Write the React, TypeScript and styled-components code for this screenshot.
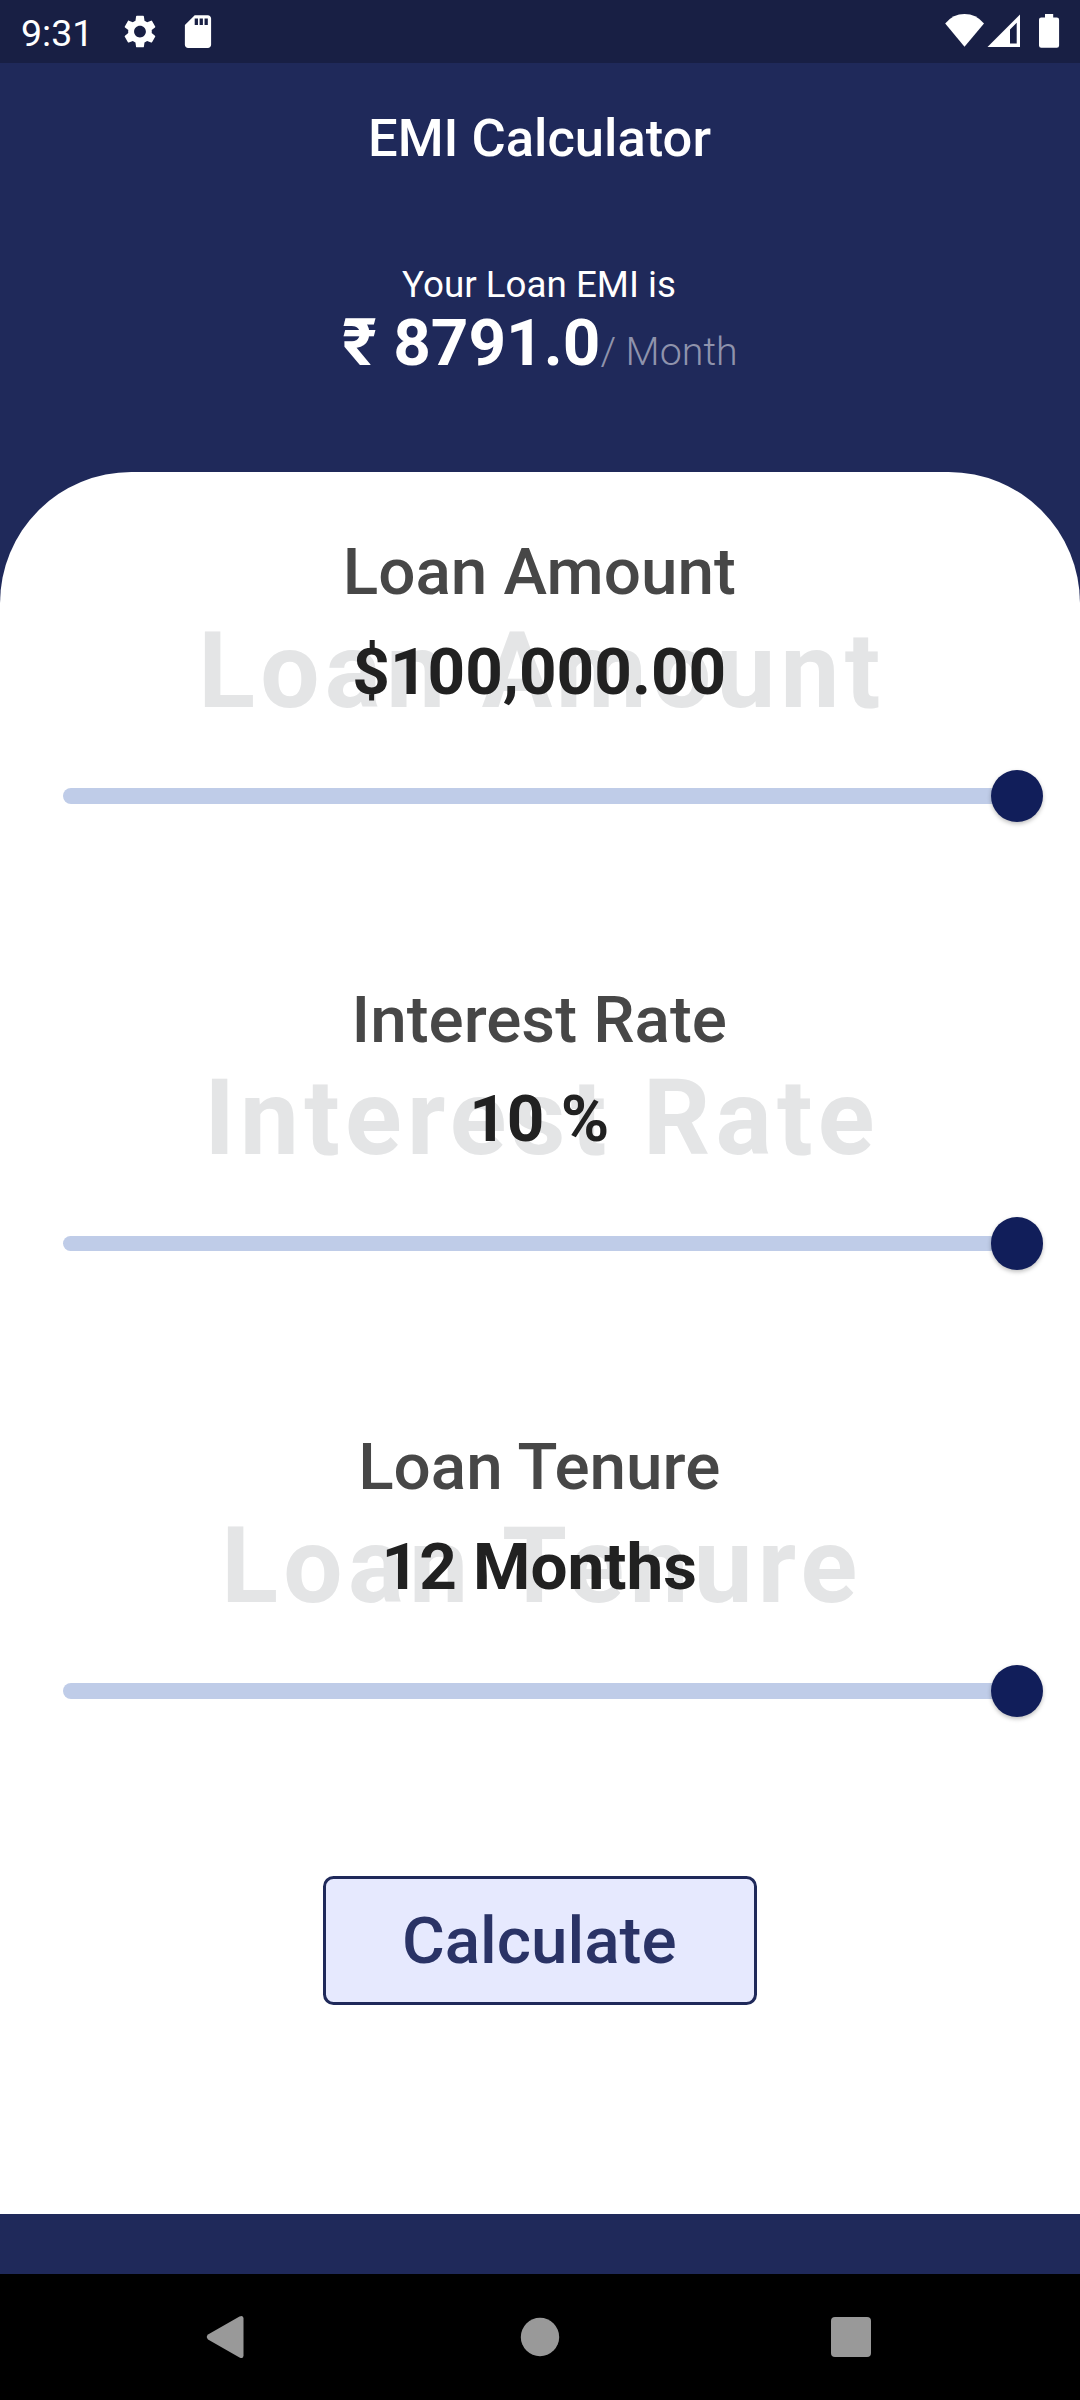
import React from 'react';
import styled, { createGlobalStyle } from 'styled-components';

const NAVY = '#1f295a';

const GlobalStyle = createGlobalStyle`
  * { box-sizing: border-box; }
  body { margin: 0; background: ${NAVY}; }
`;

const Screen = styled.div`
  width: 1080px;
  height: 2400px;
  display: flex;
  flex-direction: column;
  background: ${NAVY};
  font-family: Roboto, sans-serif;
  overflow: hidden;
`;

const StatusBar = styled.div`
  flex: none;
  height: 63px;
  background: #181f44;
  color: #fff;
  display: flex;
  align-items: center;
  justify-content: space-between;
`;

const StatusGroup = styled.div`
  display: flex;
  align-items: center;
  height: 63px;
`;

const Clock = styled.span`
  width: 102px;
  padding: 3px 0 0 21px;
  font-size: 37.5px;
  line-height: 43px;
`;

const Glyph = styled.svg`
  display: block;
  flex: none;
  height: 63px;
`;

const AppBar = styled.header`
  flex: none;
  height: 147px;
  padding: 2px 1px 0 0;
  display: flex;
  align-items: center;
  justify-content: center;
  color: #fff;
  font-size: 52.5px;
  font-weight: 500;
`;

const Summary = styled.section`
  flex: none;
  height: 262.4px;
  padding-top: 53px;
  display: flex;
  flex-direction: column;
  align-items: center;
  color: #fff;
`;

const Caption = styled.div`
  height: 42px;
  padding-right: 2px;
  font-size: 36.75px;
  line-height: 43px;
`;

const EmiRow = styled.div`
  display: flex;
  align-items: baseline;
  line-height: 76px;
`;

const EmiValue = styled.span`
  font-size: 65.625px;
  font-weight: 700;
`;

const EmiUnit = styled.span`
  font-size: 39.375px;
  font-weight: 300;
  color: #8f93ac;
`;

const Sheet = styled.main`
  flex: none;
  height: 1742px;
  padding-top: 61px;
  display: flex;
  flex-direction: column;
  align-items: center;
  background: #fff;
  border-radius: 131.25px 131.25px 0 0;
`;

const Field = styled.section`
  flex: none;
  width: 100%;
  height: 447.4px;
  display: flex;
  flex-direction: column;
  align-items: center;
`;

const Label = styled.div`
  height: 76.6px;
  padding-right: 1.5px;
  line-height: 77px;
  font-size: 65.625px;
  font-weight: 500;
  color: #474747;
`;

const ValueStack = styled.div`
  display: grid;
  height: 123px;
  padding-right: 1.5px;
  place-items: center;
  & > * { grid-area: 1 / 1; white-space: nowrap; }
`;

const Watermark = styled.div`
  padding-left: 5.25px;
  font-size: 105px;
  line-height: 123px;
  font-weight: 700;
  letter-spacing: 5.25px;
  color: #e4e5e6;
`;

const Value = styled.div`
  font-size: 65.625px;
  line-height: 77px;
  font-weight: 700;
  color: #212121;
`;

const SliderRow = styled.div`
  width: 100%;
  margin-top: 36.5px;
  padding: 0 36.75px 0 63px;
  height: 53px;
  display: flex;
  align-items: center;
`;

const Track = styled.div`
  flex: 1;
  height: 15.75px;
  margin-right: -27px;
  border-radius: 8px;
  background: #bfcce8;
`;

const Thumb = styled.div`
  flex: none;
  width: 52.5px;
  height: 52.5px;
  border-radius: 50%;
  background: #111e5a;
  box-shadow: 0 2px 4px rgba(0, 0, 0, 0.25);
`;

const CalculateButton = styled.button`
  flex: none;
  width: 433.5px;
  height: 128.5px;
  margin-top: 0.6px;
  padding: 0 1.5px 0 0;
  border: 3px solid ${NAVY};
  border-radius: 10.5px;
  background: #e6e9fe;
  color: #2a3366;
  font-family: inherit;
  font-size: 65.625px;
  font-weight: 500;
`;

const NavBar = styled.nav`
  flex: none;
  margin-top: auto;
  height: 126px;
  background: #000;
  display: flex;
  align-items: center;
  justify-content: center;
  gap: 231px;
`;

const NavGlyph = styled.svg`
  display: block;
  width: 80px;
  height: 80px;
  fill: #999;
`;

type FieldData = { label: string; value: string };

const fields: FieldData[] = [
  { label: 'Loan Amount', value: '$100,000.00' },
  { label: 'Interest Rate', value: '10 %' },
  { label: 'Loan Tenure', value: '12 Months' },
];

function SliderField({ label, value }: FieldData) {
  return (
    <Field>
      <Label>{label}</Label>
      <ValueStack>
        <Watermark aria-hidden>{label}</Watermark>
        <Value>{value}</Value>
      </ValueStack>
      <SliderRow>
        <Track />
        <Thumb />
      </SliderRow>
    </Field>
  );
}

export default function App() {
  return (
    <Screen>
      <GlobalStyle />
      <StatusBar>
        <StatusGroup>
          <Clock>9:31</Clock>
          <Glyph width="120" viewBox="102 0 120 63" fill="#fff">
            <g transform="translate(120.3 11.9) scale(1.64)">
              <path d="M19.14 12.94c.04-.3.06-.61.06-.94 0-.32-.02-.64-.07-.94l2.03-1.58a.49.49 0 0 0 .12-.61l-1.92-3.32a.488.488 0 0 0-.59-.22l-2.39.96c-.5-.38-1.03-.7-1.62-.94l-.36-2.54a.484.484 0 0 0-.48-.41h-3.84c-.24 0-.43.17-.47.41l-.36 2.54c-.59.24-1.13.57-1.62.94l-2.39-.96c-.22-.08-.47 0-.59.22L2.74 8.87c-.12.21-.08.47.12.61l2.03 1.58c-.05.3-.09.63-.09.94s.02.64.07.94l-2.03 1.58a.49.49 0 0 0-.12.61l1.92 3.32c.12.22.37.29.59.22l2.39-.96c.5.38 1.03.7 1.62.94l.36 2.54c.05.24.24.41.48.41h3.84c.24 0 .44-.17.47-.41l.36-2.54c.59-.24 1.13-.56 1.62-.94l2.39.96c.22.08.47 0 .59-.22l1.92-3.32c.12-.22.07-.47-.12-.61l-2.01-1.58zM12 15.6c-1.98 0-3.6-1.62-3.6-3.6s1.62-3.6 3.6-3.6 3.6 1.62 3.6 3.6-1.62 3.6-3.6 3.6z" />
            </g>
            <g transform="translate(178.3 11.9) scale(1.64)">
              <path d="M18 2h-8L4.020 8 4 20c0 1.100.9 2 2 2h12c1.100 0 2-.9 2-2V4c0-1.100-.9-2-2-2zm-6 6h-2V4h2v4zm3 0h-2V4h2v4zm3 0h-2V4h2v4z" />
            </g>
          </Glyph>
        </StatusGroup>
        <StatusGroup>
          <Glyph width="150" viewBox="930 0 150 63" fill="#fff">
            <path d="M964.500 46.800 945.200 23.400Q953 14 964.500 14T984 23.400Z" />
            <path fillRule="evenodd" d="M1020 14.500V47H987.500ZM1010 29.500V43.500H1016.700V22.800Z" />
            <path d="M1045 14h8.200v3.400h3.600q2.300 0 2.300 2.300v25.800q0 2.300-2.300 2.300h-15.500q-2.300 0-2.300-2.300v-25.800q0-2.300 2.300-2.300h3.700z" />
          </Glyph>
        </StatusGroup>
      </StatusBar>
      <AppBar>EMI Calculator</AppBar>
      <Summary>
        <Caption>Your Loan EMI is</Caption>
        <EmiRow>
          <EmiValue>₹ 8791.0</EmiValue>
          <EmiUnit>/ Month</EmiUnit>
        </EmiRow>
      </Summary>
      <Sheet>
        {fields.map((f) => (
          <SliderField key={f.label} {...f} />
        ))}
        <CalculateButton type="button">Calculate</CalculateButton>
      </Sheet>
      <NavBar>
        <NavGlyph viewBox="189 2297 80 80">
          <path d="M208 2334.600 239.500 2316.500Q243.500 2314.800 243.500 2318.500V2355.500Q243.500 2359.200 239.500 2357.500L208 2339.400Q205.500 2337 208 2334.600Z" />
        </NavGlyph>
        <NavGlyph viewBox="500 2297 80 80">
          <circle cx="540" cy="2337" r="19.2" />
        </NavGlyph>
        <NavGlyph viewBox="811 2297 80 80">
          <rect x="831" y="2317" width="40" height="40" rx="4" />
        </NavGlyph>
      </NavBar>
    </Screen>
  );
}
